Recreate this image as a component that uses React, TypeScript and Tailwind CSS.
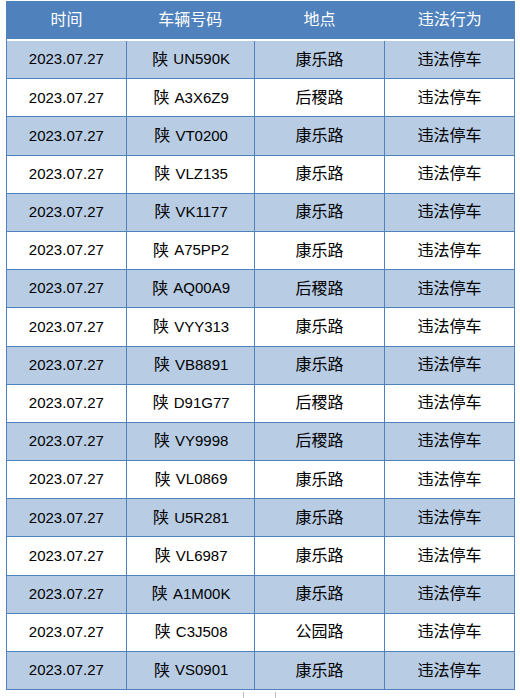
const rows: [string, string][] = [
  ['UN590K', '康乐路'],
  ['A3X6Z9', '后稷路'],
  ['VT0200', '康乐路'],
  ['VLZ135', '康乐路'],
  ['VK1177', '康乐路'],
  ['A75PP2', '康乐路'],
  ['AQ00A9', '后稷路'],
  ['VYY313', '康乐路'],
  ['VB8891', '康乐路'],
  ['D91G77', '后稷路'],
  ['VY9998', '后稷路'],
  ['VL0869', '康乐路'],
  ['U5R281', '康乐路'],
  ['VL6987', '康乐路'],
  ['A1M00K', '康乐路'],
  ['C3J508', '公园路'],
  ['VS0901', '康乐路'],
];

const cols = ['w-[120px]', 'w-[128px]', 'w-[131px]', 'w-[129px]'];

export default function App() {
  return (
    <div
      className="w-[520px] h-[698px] bg-white overflow-hidden text-black"
      style={{ fontFamily: '"Liberation Sans", "Noto Sans CJK SC", sans-serif' }}
    >
      {/* Table */}
      <div className="ml-[6px] mt-px w-[509px] border-l border-r border-[#4f81bd]">
        {/* Header */}
        <div className="flex h-[38px] bg-[#4f81bd] text-white text-[16px]">
          {['时间', '车辆号码', '地点', '违法行为'].map((h, i) => (
            <div key={h} className={`${cols[i]} flex items-center justify-center ${i < 3 ? 'border-r border-[#4f81bd]' : ''}`}>
              {h}
            </div>
          ))}
        </div>
        <div className="h-[2px] bg-white" />

        {/* Body */}
        {rows.map(([plate, place], r) => (
          <div
            key={plate}
            className={`flex h-[38.2px] border-b border-[#4f81bd] ${r % 2 === 0 ? 'bg-[#b8cce4]' : 'bg-white'}`}
          >
            <div className={`${cols[0]} flex items-center justify-center border-r border-[#4f81bd] text-[15px]`}>
              2023.07.27
            </div>
            <div className={`${cols[1]} flex items-center justify-center border-r border-[#4f81bd] text-[15px] pl-[2px]`}>
              <span className="text-[16px]">陕</span>
              <span className="ml-[5px]">{plate}</span>
            </div>
            <div className={`${cols[2]} flex items-center justify-center border-r border-[#4f81bd] text-[16px]`}>
              {place}
            </div>
            <div className={`${cols[3]} flex items-center justify-center text-[16px]`}>
              违法停车
            </div>
          </div>
        ))}
      </div>

      {/* sheet scrollbar remnant */}
      <div className="ml-[243px] mt-[2px] w-[33px] h-[8px] border-l border-r border-[#c0c0c0]" />
    </div>
  );
}
